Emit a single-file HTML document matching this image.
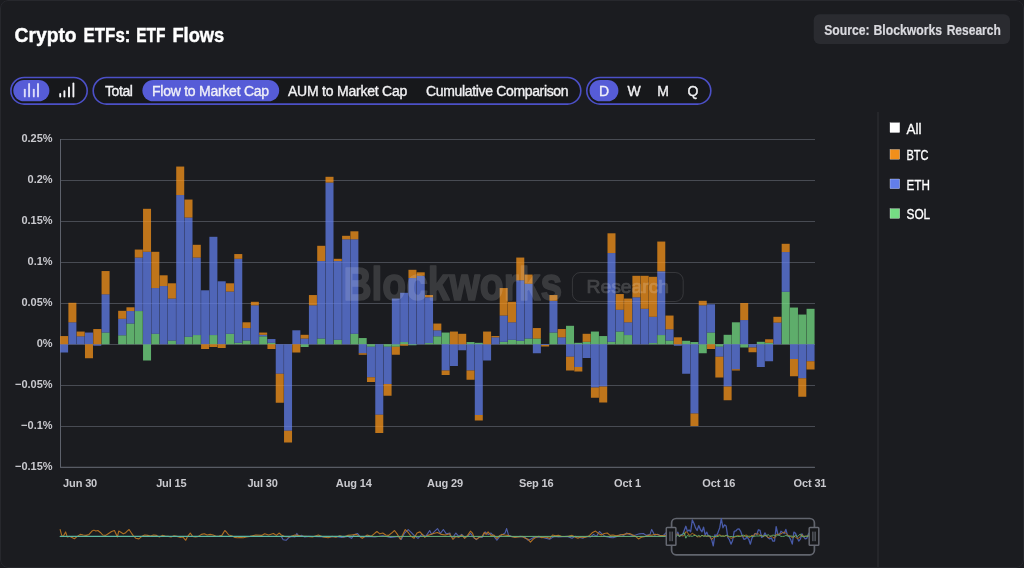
<!DOCTYPE html>
<html lang="en">
<head>
<meta charset="utf-8">
<title>Crypto ETFs: ETF Flows</title>
<style>
*{box-sizing:border-box;margin:0;padding:0}
html,body{width:1024px;height:568px;overflow:hidden;background:#1b1c20}
body{font-family:"Liberation Sans",Arial,sans-serif;color:#fff;position:relative}
.card{position:absolute;left:0;top:0;width:1024px;height:568px;background:#1b1c20;border-radius:8px;overflow:hidden}
.card:after{content:"";position:absolute;left:0;top:0;right:0;bottom:0;border:1px solid #27282d;border-radius:8px;pointer-events:none}
.chart{position:absolute;left:0;top:0;will-change:transform}
.lbl{position:absolute;top:82.1px;height:18px;line-height:18px;font-size:14px;color:#f2f2f4;white-space:nowrap;-webkit-text-stroke:0.35px #f2f2f4;will-change:transform}
.lbl.on{color:#eeeefc}
.lbl.c{width:30px;text-align:center}
.vline{position:absolute;left:877px;top:112px;width:2px;height:456px;background:#25262a}
</style>
</head>
<body>
<div class="card">
<svg class="chart" width="1024" height="568" viewBox="0 0 1024 568">
<g stroke="#484b53" stroke-width="1" shape-rendering="crispEdges">
<line x1="60.5" x2="814.8" y1="467.25" y2="467.25"/>
<line x1="60.5" x2="814.8" y1="426.25" y2="426.25"/>
<line x1="60.5" x2="814.8" y1="385.25" y2="385.25"/>
<line x1="60.5" x2="814.8" y1="344.25" y2="344.25"/>
<line x1="60.5" x2="814.8" y1="303.25" y2="303.25"/>
<line x1="60.5" x2="814.8" y1="262.25" y2="262.25"/>
<line x1="60.5" x2="814.8" y1="221.25" y2="221.25"/>
<line x1="60.5" x2="814.8" y1="180.25" y2="180.25"/>
<line x1="60.5" x2="814.8" y1="139.25" y2="139.25"/>
</g>
<g stroke="#5d616b" stroke-width="1">
<line x1="60.5" x2="60.5" y1="139" y2="467.5"/>
<line x1="60" x2="814.8" y1="467.25" y2="467.25"/>
</g>
<g font-family="Liberation Sans, Arial, sans-serif" font-weight="700" font-size="11" fill="#c9c9ce" text-anchor="end">
<text x="52.6" y="469.65">−0.15%</text>
<text x="52.6" y="428.65">−0.1%</text>
<text x="52.6" y="387.65">−0.05%</text>
<text x="52.6" y="346.65">0%</text>
<text x="52.6" y="305.65">0.05%</text>
<text x="52.6" y="264.65">0.1%</text>
<text x="52.6" y="223.65">0.15%</text>
<text x="52.6" y="182.65">0.2%</text>
<text x="52.6" y="141.65">0.25%</text>
</g>
<g font-family="Liberation Sans, Arial, sans-serif" font-weight="700" font-size="11" fill="#c9c9ce" text-anchor="middle" letter-spacing="-0.14">
<text x="80.09" y="487.3">Jun 30</text>
<text x="171.32" y="487.3">Jul 15</text>
<text x="262.56" y="487.3">Jul 30</text>
<text x="353.79" y="487.3">Aug 14</text>
<text x="445.02" y="487.3">Aug 29</text>
<text x="536.26" y="487.3">Sep 16</text>
<text x="627.49" y="487.3">Oct 1</text>
<text x="718.73" y="487.3">Oct 16</text>
<text x="809.96" y="487.3">Oct 31</text>
</g>
<g fill="#75DE84" fill-opacity="0.75">
<rect x="101.57" y="332.55" width="8" height="11.7"/><rect x="118.16" y="335.3" width="8" height="8.95"/><rect x="126.45" y="323.55" width="8" height="20.7"/><rect x="134.75" y="311.05" width="8" height="33.2"/><rect x="143.04" y="344.25" width="8" height="16.25"/><rect x="151.33" y="333.8" width="8" height="10.45"/><rect x="167.92" y="340.55" width="8" height="3.7"/><rect x="184.51" y="336.8" width="8" height="7.45"/><rect x="192.8" y="335.05" width="8" height="9.2"/><rect x="209.39" y="335.05" width="8" height="9.2"/><rect x="225.98" y="333.8" width="8" height="10.45"/><rect x="234.27" y="342.8" width="8" height="1.45"/><rect x="242.57" y="340.55" width="8" height="3.7"/><rect x="259.16" y="336.3" width="8" height="7.95"/><rect x="267.45" y="342.8" width="8" height="1.45"/><rect x="300.63" y="344.25" width="8" height="2.75"/><rect x="317.21" y="338.55" width="8" height="5.7"/><rect x="333.8" y="339.8" width="8" height="4.45"/><rect x="350.39" y="333.8" width="8" height="10.45"/><rect x="358.68" y="338.05" width="8" height="6.2"/><rect x="366.98" y="344.25" width="8" height="2.5"/><rect x="383.57" y="344.25" width="8" height="2.5"/><rect x="391.86" y="344.25" width="8" height="2.5"/><rect x="400.15" y="342.05" width="8" height="2.2"/><rect x="408.45" y="344.25" width="8" height="1"/><rect x="425.04" y="343.05" width="8" height="1.2"/><rect x="433.33" y="336.3" width="8" height="7.95"/><rect x="441.62" y="332.55" width="8" height="11.7"/><rect x="466.51" y="342.05" width="8" height="2.2"/><rect x="474.8" y="342.8" width="8" height="1.45"/><rect x="499.68" y="341.8" width="8" height="2.45"/><rect x="507.98" y="339.8" width="8" height="4.45"/><rect x="516.27" y="340.8" width="8" height="3.45"/><rect x="524.56" y="338.55" width="8" height="5.7"/><rect x="532.86" y="338.55" width="8" height="5.7"/><rect x="549.45" y="332.55" width="8" height="11.7"/><rect x="566.03" y="325.8" width="8" height="18.45"/><rect x="574.33" y="342.8" width="8" height="1.45"/><rect x="582.62" y="341.8" width="8" height="2.45"/><rect x="590.92" y="331.55" width="8" height="12.7"/><rect x="599.21" y="336.05" width="8" height="8.2"/><rect x="607.5" y="341.8" width="8" height="2.45"/><rect x="615.8" y="331.55" width="8" height="12.7"/><rect x="624.09" y="335.05" width="8" height="9.2"/><rect x="648.97" y="343.05" width="8" height="1.2"/><rect x="657.27" y="335.05" width="8" height="9.2"/><rect x="665.56" y="340.55" width="8" height="3.7"/><rect x="682.15" y="340.8" width="8" height="3.45"/><rect x="690.44" y="342.05" width="8" height="2.2"/><rect x="698.74" y="344.25" width="8" height="9"/><rect x="707.03" y="332.55" width="8" height="11.7"/><rect x="715.33" y="344.25" width="8" height="2.5"/><rect x="723.62" y="334.8" width="8" height="9.45"/><rect x="731.91" y="322.3" width="8" height="21.95"/><rect x="740.21" y="344.25" width="8" height="3.25"/><rect x="756.8" y="341.8" width="8" height="2.45"/><rect x="765.09" y="342.8" width="8" height="1.45"/><rect x="781.68" y="291.8" width="8" height="52.45"/><rect x="789.97" y="307.55" width="8" height="36.7"/><rect x="798.27" y="314.55" width="8" height="29.7"/><rect x="806.56" y="308.8" width="8" height="35.45"/>
</g>
<g fill="#627EEA" fill-opacity="0.75">
<rect x="60.1" y="344.25" width="8" height="8.25"/><rect x="68.39" y="322.3" width="8" height="21.95"/><rect x="76.69" y="336.3" width="8" height="7.95"/><rect x="84.98" y="332.55" width="8" height="11.7"/><rect x="93.28" y="344.25" width="8" height="1.5"/><rect x="101.57" y="294.3" width="8" height="38.25"/><rect x="118.16" y="318.8" width="8" height="16.5"/><rect x="126.45" y="311.05" width="8" height="12.5"/><rect x="134.75" y="257.55" width="8" height="53.5"/><rect x="143.04" y="251.8" width="8" height="92.45"/><rect x="151.33" y="288.05" width="8" height="45.75"/><rect x="159.63" y="286.05" width="8" height="58.2"/><rect x="167.92" y="298.55" width="8" height="42"/><rect x="176.22" y="195.05" width="8" height="149.2"/><rect x="184.51" y="217.55" width="8" height="119.25"/><rect x="192.8" y="257.55" width="8" height="77.5"/><rect x="201.1" y="290.3" width="8" height="53.95"/><rect x="209.39" y="236.8" width="8" height="98.25"/><rect x="217.69" y="281.3" width="8" height="62.95"/><rect x="225.98" y="291.55" width="8" height="42.25"/><rect x="234.27" y="258.8" width="8" height="84"/><rect x="242.57" y="328.05" width="8" height="12.5"/><rect x="250.86" y="305.3" width="8" height="38.95"/><rect x="259.16" y="334.8" width="8" height="1.5"/><rect x="267.45" y="339.05" width="8" height="3.75"/><rect x="275.74" y="344.25" width="8" height="29.5"/><rect x="284.04" y="344.25" width="8" height="86.5"/><rect x="292.33" y="330.3" width="8" height="13.95"/><rect x="300.63" y="338.55" width="8" height="5.7"/><rect x="308.92" y="305.3" width="8" height="38.95"/><rect x="317.21" y="261.05" width="8" height="77.5"/><rect x="325.51" y="182.55" width="8" height="161.7"/><rect x="333.8" y="261.05" width="8" height="78.75"/><rect x="342.1" y="239.3" width="8" height="104.95"/><rect x="350.39" y="239.3" width="8" height="94.5"/><rect x="358.68" y="344.25" width="8" height="9"/><rect x="366.98" y="346.75" width="8" height="30.5"/><rect x="375.27" y="344.25" width="8" height="70.5"/><rect x="383.57" y="346.75" width="8" height="37.25"/><rect x="391.86" y="298.55" width="8" height="45.7"/><rect x="400.15" y="292.8" width="8" height="49.25"/><rect x="408.45" y="278.05" width="8" height="66.2"/><rect x="416.74" y="275.8" width="8" height="68.45"/><rect x="425.04" y="297.3" width="8" height="45.75"/><rect x="433.33" y="330.3" width="8" height="6"/><rect x="441.62" y="344.25" width="8" height="26.25"/><rect x="449.92" y="344.25" width="8" height="21.75"/><rect x="458.21" y="344.25" width="8" height="6"/><rect x="466.51" y="344.25" width="8" height="26.25"/><rect x="474.8" y="344.25" width="8" height="70.75"/><rect x="483.09" y="344.25" width="8" height="16.25"/><rect x="491.39" y="337.3" width="8" height="6.95"/><rect x="499.68" y="315.55" width="8" height="26.25"/><rect x="507.98" y="322.3" width="8" height="17.5"/><rect x="516.27" y="280.3" width="8" height="60.5"/><rect x="524.56" y="283.8" width="8" height="54.75"/><rect x="532.86" y="344.25" width="8" height="9"/><rect x="541.15" y="344.25" width="8" height="0.75"/><rect x="549.45" y="300.8" width="8" height="31.75"/><rect x="557.74" y="337.3" width="8" height="6.95"/><rect x="566.03" y="344.25" width="8" height="12.5"/><rect x="574.33" y="344.25" width="8" height="22.75"/><rect x="582.62" y="344.25" width="8" height="13.75"/><rect x="590.92" y="344.25" width="8" height="43.25"/><rect x="599.21" y="344.25" width="8" height="42.25"/><rect x="607.5" y="253.05" width="8" height="88.75"/><rect x="615.8" y="309.8" width="8" height="21.75"/><rect x="624.09" y="322.3" width="8" height="12.75"/><rect x="632.39" y="297.3" width="8" height="46.95"/><rect x="640.68" y="308.8" width="8" height="35.45"/><rect x="648.97" y="316.8" width="8" height="26.25"/><rect x="657.27" y="271.3" width="8" height="63.75"/><rect x="665.56" y="329.3" width="8" height="11.25"/><rect x="673.86" y="344.25" width="8" height="1.5"/><rect x="682.15" y="344.25" width="8" height="29.5"/><rect x="690.44" y="344.25" width="8" height="69.25"/><rect x="698.74" y="305.3" width="8" height="38.95"/><rect x="707.03" y="304.3" width="8" height="28.25"/><rect x="715.33" y="346.75" width="8" height="10"/><rect x="723.62" y="344.25" width="8" height="42.25"/><rect x="731.91" y="344.25" width="8" height="25"/><rect x="740.21" y="320.05" width="8" height="24.2"/><rect x="748.5" y="344.25" width="8" height="3.25"/><rect x="756.8" y="344.25" width="8" height="22.75"/><rect x="765.09" y="344.25" width="8" height="17"/><rect x="773.38" y="322.55" width="8" height="21.7"/><rect x="781.68" y="252.05" width="8" height="39.75"/><rect x="789.97" y="344.25" width="8" height="14.75"/><rect x="798.27" y="344.25" width="8" height="34"/><rect x="806.56" y="344.25" width="8" height="17"/>
</g>
<g fill="#F7931A" fill-opacity="0.75">
<rect x="60.1" y="336.05" width="8" height="8.2"/><rect x="68.39" y="302.8" width="8" height="19.5"/><rect x="76.69" y="331.55" width="8" height="4.75"/><rect x="84.98" y="344.25" width="8" height="14"/><rect x="93.28" y="329.05" width="8" height="15.2"/><rect x="101.57" y="271.05" width="8" height="23.25"/><rect x="118.16" y="310.8" width="8" height="8"/><rect x="126.45" y="307.3" width="8" height="3.75"/><rect x="134.75" y="249.55" width="8" height="8"/><rect x="143.04" y="208.8" width="8" height="43"/><rect x="151.33" y="251.8" width="8" height="36.25"/><rect x="159.63" y="275.3" width="8" height="10.75"/><rect x="167.92" y="283.3" width="8" height="15.25"/><rect x="176.22" y="166.55" width="8" height="28.5"/><rect x="184.51" y="199.55" width="8" height="18"/><rect x="192.8" y="244.8" width="8" height="12.75"/><rect x="201.1" y="344.25" width="8" height="4.75"/><rect x="209.39" y="344.25" width="8" height="2.75"/><rect x="217.69" y="344.25" width="8" height="3.75"/><rect x="225.98" y="283.3" width="8" height="8.25"/><rect x="234.27" y="254.05" width="8" height="4.75"/><rect x="242.57" y="322.3" width="8" height="5.75"/><rect x="250.86" y="301.8" width="8" height="3.5"/><rect x="259.16" y="332.55" width="8" height="2.25"/><rect x="267.45" y="344.25" width="8" height="4.75"/><rect x="275.74" y="373.75" width="8" height="29"/><rect x="284.04" y="430.75" width="8" height="11.75"/><rect x="292.33" y="344.25" width="8" height="8.25"/><rect x="300.63" y="334.8" width="8" height="3.75"/><rect x="308.92" y="295.05" width="8" height="10.25"/><rect x="317.21" y="245.8" width="8" height="15.25"/><rect x="325.51" y="176.8" width="8" height="5.75"/><rect x="333.8" y="258.8" width="8" height="2.25"/><rect x="342.1" y="235.8" width="8" height="3.5"/><rect x="350.39" y="231.3" width="8" height="8"/><rect x="358.68" y="353.25" width="8" height="1.5"/><rect x="366.98" y="377.25" width="8" height="4.75"/><rect x="375.27" y="414.75" width="8" height="18.25"/><rect x="383.57" y="384" width="8" height="11.75"/><rect x="391.86" y="346.75" width="8" height="8"/><rect x="400.15" y="344.25" width="8" height="1.5"/><rect x="408.45" y="269.8" width="8" height="8.25"/><rect x="416.74" y="272.3" width="8" height="3.5"/><rect x="425.04" y="295.05" width="8" height="2.25"/><rect x="433.33" y="323.55" width="8" height="6.75"/><rect x="441.62" y="370.5" width="8" height="4.5"/><rect x="449.92" y="331.55" width="8" height="12.7"/><rect x="458.21" y="333.8" width="8" height="10.45"/><rect x="466.51" y="370.5" width="8" height="9.25"/><rect x="474.8" y="415" width="8" height="5.5"/><rect x="483.09" y="331.55" width="8" height="12.7"/><rect x="491.39" y="336.05" width="8" height="1.25"/><rect x="499.68" y="288.05" width="8" height="27.5"/><rect x="507.98" y="301.8" width="8" height="20.5"/><rect x="516.27" y="257.55" width="8" height="22.75"/><rect x="524.56" y="274.55" width="8" height="9.25"/><rect x="532.86" y="328.05" width="8" height="10.5"/><rect x="541.15" y="345" width="8" height="1.5"/><rect x="549.45" y="295.05" width="8" height="5.75"/><rect x="557.74" y="329.05" width="8" height="8.25"/><rect x="566.03" y="356.75" width="8" height="13.75"/><rect x="574.33" y="367" width="8" height="4.5"/><rect x="582.62" y="333.8" width="8" height="8"/><rect x="590.92" y="387.5" width="8" height="10.25"/><rect x="599.21" y="386.5" width="8" height="16"/><rect x="607.5" y="233.3" width="8" height="19.75"/><rect x="615.8" y="294.05" width="8" height="15.75"/><rect x="624.09" y="298.55" width="8" height="23.75"/><rect x="632.39" y="275.8" width="8" height="21.5"/><rect x="640.68" y="275.8" width="8" height="33"/><rect x="648.97" y="276.8" width="8" height="40"/><rect x="657.27" y="241.55" width="8" height="29.75"/><rect x="665.56" y="315.55" width="8" height="13.75"/><rect x="673.86" y="337.3" width="8" height="6.95"/><rect x="690.44" y="413.5" width="8" height="12.5"/><rect x="698.74" y="300.8" width="8" height="4.5"/><rect x="707.03" y="344.25" width="8" height="4.75"/><rect x="715.33" y="356.75" width="8" height="20.75"/><rect x="723.62" y="386.5" width="8" height="13.75"/><rect x="731.91" y="369.25" width="8" height="1.25"/><rect x="740.21" y="303.05" width="8" height="17"/><rect x="748.5" y="347.5" width="8" height="4.75"/><rect x="765.09" y="339.3" width="8" height="3.5"/><rect x="773.38" y="316.8" width="8" height="5.75"/><rect x="781.68" y="243.8" width="8" height="8.25"/><rect x="789.97" y="359" width="8" height="17.25"/><rect x="798.27" y="378.25" width="8" height="18.5"/><rect x="806.56" y="361.25" width="8" height="8.25"/>
</g>
<g opacity="0.135" fill="#ffffff" stroke="#ffffff" stroke-linejoin="round" font-family="Liberation Sans, Arial, sans-serif" font-weight="700">
<text x="343.4" y="300" font-size="47" stroke-width="1.6" textLength="218.8" lengthAdjust="spacingAndGlyphs">Blockworks</text>
</g>
<g opacity="0.17" fill="#ffffff" stroke="#ffffff" font-family="Liberation Sans, Arial, sans-serif" font-weight="700">
<text x="586.5" y="293.2" font-size="18.5" font-weight="400" stroke-width="0.7" textLength="82.6" lengthAdjust="spacingAndGlyphs">Research</text>
</g>
<rect x="572.4" y="272.5" width="110.8" height="29" rx="8" ry="8" fill="none" stroke="#ffffff" stroke-opacity="0.12" stroke-width="1"/>
<g font-family="Liberation Sans, Arial, sans-serif" font-size="14" fill="#ffffff" stroke="#ffffff" stroke-width="0.3">
<rect x="890" y="122.8" width="9.7" height="9.7" fill="#ffffff"/>
<text x="906.5" y="133.7" textLength="15" lengthAdjust="spacingAndGlyphs">All</text>
<rect x="890" y="149.5" width="9.7" height="9.7" fill="#F18F1A"/>
<text x="906.5" y="159.9" textLength="22" lengthAdjust="spacingAndGlyphs">BTC</text>
<rect x="890" y="179" width="9.7" height="9.7" fill="#627EEA"/>
<text x="906.5" y="189.9" textLength="23.4" lengthAdjust="spacingAndGlyphs">ETH</text>
<rect x="890" y="208.7" width="9.7" height="9.7" fill="#75DE84"/>
<text x="906.5" y="218.9" textLength="23.7" lengthAdjust="spacingAndGlyphs">SOL</text>
</g>
<text font-family="Liberation Sans, Arial, sans-serif" font-weight="700" font-size="21" fill="#ffffff" stroke="#ffffff" stroke-width="0.45" y="42.3">
<tspan x="14.6" textLength="62" lengthAdjust="spacingAndGlyphs">Crypto</tspan>
<tspan x="83.6" textLength="46.8" lengthAdjust="spacingAndGlyphs">ETFs:</tspan>
<tspan x="136.2" textLength="29.2" lengthAdjust="spacingAndGlyphs">ETF</tspan>
<tspan x="172.4" textLength="51.8" lengthAdjust="spacingAndGlyphs">Flows</tspan>
</text>
<rect x="813.7" y="14.2" width="196.3" height="29.8" rx="6" fill="#2a2b30"/>
<text font-family="Liberation Sans, Arial, sans-serif" font-weight="700" font-size="14.4" fill="#d9d9de" stroke="#d9d9de" stroke-width="0.2" y="35.2">
<tspan x="824.2" textLength="45.3" lengthAdjust="spacingAndGlyphs">Source:</tspan>
<tspan x="873.4" textLength="68.8" lengthAdjust="spacingAndGlyphs">Blockworks</tspan>
<tspan x="946.7" textLength="54.1" lengthAdjust="spacingAndGlyphs">Research</tspan>
</text>
<rect x="10.9" y="77.5" width="76.3" height="26.6" rx="13.3" fill="#17181b" stroke="#4c50c8" stroke-width="1.6"/>
<rect x="13.3" y="79.9" width="36.1" height="21.4" rx="10.7" fill="#565cd7"/>
<rect x="93.2" y="77.5" width="487.6" height="26.6" rx="13.3" fill="#17181b" stroke="#4c50c8" stroke-width="1.6"/>
<rect x="142.4" y="79.9" width="136.8" height="21.4" rx="10.7" fill="#565cd7"/>
<rect x="586.8" y="77.5" width="124" height="26.6" rx="13.3" fill="#17181b" stroke="#4c50c8" stroke-width="1.6"/>
<rect x="589.5" y="79.9" width="28.9" height="21.4" rx="10.7" fill="#565cd7"/>
<g stroke="#dcdcfa" stroke-width="1.9" stroke-linecap="round">
<line x1="24.8" x2="24.8" y1="89.6" y2="96.4"/>
<line x1="29.1" x2="29.1" y1="83.9" y2="96.4"/>
<line x1="33.8" x2="33.8" y1="89.6" y2="96.4"/>
<line x1="38" x2="38" y1="83.9" y2="96.4"/>
</g>
<g stroke="#f4f4f6" stroke-width="1.9" stroke-linecap="round">
<line x1="60.2" x2="60.2" y1="94" y2="96.5"/>
<line x1="64.4" x2="64.4" y1="91.1" y2="96.5"/>
<line x1="69" x2="69" y1="87.4" y2="96.5"/>
<line x1="73.4" x2="73.4" y1="83.5" y2="96.5"/>
</g>
<rect x="671.6" y="518.5" width="142.8" height="36.3" rx="4.5" ry="4.5" fill="#17181b" stroke="#62656e" stroke-width="1.7"/>
<g fill="none" stroke-width="1.1" stroke-linejoin="round" stroke-linecap="round">
<polyline stroke="#5a6cc4" stroke-opacity="0.85" points="281.25,536.37 283.2,539.69 286.13,540.27 289.06,537.34 291.99,536.37 294.92,536.95 296.88,533.44 298.83,536.37 301.76,535.39 304.69,536.95 308.59,536.37 312.5,536.56 328.12,536.95 335.94,536.56 341.8,537.34 347.66,536.37 351.56,538.32 354.49,534.41 357.42,533.44 360.35,536.95 367.19,536.37 375,536.95 382.81,535.78 390.62,537.34 398.44,536.37 401.37,539.3 404.3,533.44 408.2,529.53 411.13,532.46 414.06,535.39 417.97,538.32 421.88,534.41 425.78,536.37 429.69,530.51 431.64,534.41 434.57,531.48 437.5,528.55 440.43,533.44 443.36,529.53 446.29,533.83 450,533.05 450,535.39 452.93,537.34 455.86,533.05 458.79,536.37 461.72,534.41 464.65,537.34 467.58,536.37 470.51,533.44 473.44,537.34 476.37,539.69 479.3,536.95 482.23,537.34 485.16,531.88 488.09,534.41 491.02,533.05 493.95,536.37 496.88,540.27 499.8,536.37 502.73,534.41 505.08,533.05 506.64,528.55 508.59,535.39 511.52,536.37 514.45,536.95 520.31,536.37 525.2,537.34 528.12,540.27 531.05,538.91 533.98,537.34 537.89,536.95 541.8,537.34 545.7,538.32 549.61,539.3 552.54,537.34 555.47,536.37 558.4,536.95 567.19,536.37 572.07,538.32 575,536.37 578.91,537.34 582.81,538.32 586.72,536.37 590.62,536.95 593.55,534.41 596.48,536.37 599.41,531.48 602.34,534.41 605.27,536.37 609.18,537.34 613.09,537.73 616.99,536.37 620.9,534.41 623.83,535.39 626.76,533.05 629.69,534.41 632.62,535.39 635.55,535 639.45,533.83 643.36,533.44 646.29,535.39 650,534.41 651.72,529.41 654.65,535.27 657.58,534.3 660.51,535.86 663.44,535.27 666.37,532.34 671.25,534.3"/>
<polyline stroke="#b87422" stroke-opacity="0.95" points="60.16,529.53 61.72,535.39 63.28,536.37 65.62,531.88 67.19,536.95 69.53,536.37 71.48,537.34 74.41,538.71 77.34,536.37 80.27,534.41 83.2,535 86.13,535.39 89.06,534.41 91.99,531.09 93.95,530.12 95.9,531.09 97.85,530.51 100.39,532.46 102.73,535 105.66,535.39 108.59,533.44 111.52,531.48 114.45,530.51 117.38,536.95 118.75,531.09 121.29,532.46 123.24,533.83 125.2,533.05 127.15,531.09 129.1,529.53 131.05,532.46 133.01,535.39 135.94,538.32 138.87,538.91 141.8,536.37 144.73,535 147.66,535.39 150.59,535.98 153.52,535 156.45,535.39 159.38,536.95 162.3,535.39 165.23,535.98 168.16,536.37 171.09,536.95 174.02,535.78 176.95,536.37 179.88,537.34 182.81,536.95 185.74,540.27 187.7,536.37 190.23,533.05 192.58,536.37 195.51,536.95 198.44,536.37 201.37,534.41 204.3,533.83 207.23,535 210.16,534.41 213.09,535 216.02,536.37 218.95,535.98 221.88,535.39 224.8,530.51 226.76,532.46 228.71,535 231.64,535.78 234.57,537.34 237.5,537.73 240.43,537.34 243.36,537.73 246.29,536.95 250,536.37 250,536.37 255.86,535 261.72,535.39 264.65,533.83 268.55,535 273.44,533.44 276.37,535.39 279.3,533.05 281.25,535 284.18,536.37 289.06,536.95 294.92,535 297.85,535.39 300.78,535.98 306.64,536.37 312.5,536.95 318.36,535 323.24,536.95 328.12,537.73 332.03,536.37 335.94,537.34 339.84,535.78 343.75,536.95 347.66,535.39 351.56,535 356.45,534.41 359.38,536.37 362.3,538.32 365.23,536.37 367.19,535 371.09,536.37 375,533.05 376.95,531.48 379.88,533.83 382.81,533.05 385.74,535 388.67,535.39 391.6,533.05 394.53,530.51 397.46,534.41 400.39,539.3 403.32,533.44 405.27,529.53 408.2,532.46 411.13,536.37 414.06,538.32 416.99,533.05 419.92,531.88 422.85,535 424.8,537.34 427.73,535.39 430.66,534.41 433.59,533.44 437.5,532.46 441.41,534.41 445.31,535 450,533.83 450,534.41 452.93,539.3 455.86,536.37 458.79,537.34 461.72,535 464.65,538.32 467.58,535.39 470.51,531.09 472.46,533.05 474.41,538.32 476.37,539.3 479.3,537.34 482.23,536.37 484.18,532.46 486.13,534.41 488.09,531.88 491.02,535.39 493.95,535 496.88,538.32 499.8,535.39 501.76,534.41 504.69,535 507.62,535.39 510.55,536.37 514.45,537.34 518.36,536.95 522.27,536.37 525.2,538.32 528.12,539.3 530.47,542.23 533.01,539.3 535.94,537.34 538.87,536.37 541.8,537.73 545.7,536.95 549.61,538.32 552.54,535 555.47,535.78 558.4,535.39 561.33,536.37 567.19,536.56 572.07,535.39 575,536.95 577.93,538.32 580.86,536.95 583.79,537.34 586.72,536.95 589.65,535.39 592.58,532.46 595.51,531.09 598.44,533.44 601.37,535 604.3,533.44 607.23,533.05 610.16,535.39 613.09,535 616.02,535.78 619.92,535 623.83,534.41 626.76,533.83 629.69,533.44 632.62,535 635.55,536.37 638.48,538.91 641.41,537.34 645.31,536.37 650,535 651.72,535.27 655.62,534.3 659.53,535.27 663.44,535.86 666.37,535.27 671.25,535.86"/>
<line x1="60.2" x2="372" y1="536.4" y2="536.4" stroke="#5cb8a2"/>
<line x1="372" x2="671.6" y1="536.4" y2="536.4" stroke="#6ab47e" stroke-width="1"/>
<polyline stroke="#485aa8" stroke-width="1.3" points="669.7,537.31 671.31,534.01 672.93,535.55 674.54,535.13 676.15,536.56 677.77,532.19 679.38,536.4 680.99,534.58 682.6,535.02 684.22,530.51 685.83,526.25 687.44,531.37 689.06,530.02 690.67,531.78 692.28,520.01 693.9,523.28 695.51,527.88 697.12,530.49 698.73,525.59 700.35,529.5 701.96,531.75 703.57,527.16 705.19,535.02 706.8,532.14 708.41,536.24 710.03,535.99 711.64,539.64 713.25,545.91 714.86,534.89 716.48,535.79 718.09,532.14 719.7,527.88 721.32,518.63 722.93,527.74 724.54,524.88 726.16,526 727.77,537.39 729.38,539.75 730.99,544.15 732.61,540.5 734.22,531.39 735.83,530.98 737.45,529.14 739.06,528.89 740.67,531.37 742.29,535.74 743.9,539.29 745.51,538.79 747.12,537.06 748.74,539.29 750.35,544.18 751.96,538.19 753.58,535.66 755.19,533.51 756.8,534.48 758.42,529.75 760.03,530.38 761.64,537.39 763.25,536.48 764.87,532.91 766.48,535.66 768.09,537.77 769.71,538.9 771.32,537.91 772.93,541.16 774.55,541.05 776.16,526.64 777.77,534.01 779.38,535 781,531.26 782.61,532.52 784.22,533.51 785.84,529.39 787.45,535.16 789.06,536.56 790.68,539.64 792.29,544.02 793.9,532.14 795.51,533.29 797.13,537.5 798.74,541.05 800.35,539.15 801.97,533.76 803.58,536.76 805.19,538.9 806.81,538.27 808.42,534.03 810.03,532.03 811.64,538.02 813.26,540.14 814.87,538.27"/>
<polyline stroke="#b06c20" stroke-width="1.0" points="669.7,535.52 671.31,534.25 672.93,535.88 674.54,537.94 676.15,534.75 677.77,533.84 679.38,536.4 680.99,535.52 682.6,535.99 684.22,535.52 685.83,531.67 687.44,532.41 689.06,535.22 690.67,534.72 692.28,533.26 693.9,534.42 695.51,535 697.12,536.92 698.73,536.7 700.35,536.81 701.96,535.49 703.57,535.88 705.19,535.77 706.8,536.01 708.41,536.15 710.03,536.92 711.64,539.59 713.25,537.69 714.86,537.31 716.48,535.99 718.09,535.27 719.7,534.72 721.32,535.77 722.93,536.15 724.54,536.01 726.16,535.52 727.77,536.56 729.38,536.92 730.99,538.41 732.61,537.69 734.22,537.28 735.83,536.56 737.45,535.49 739.06,536.01 740.67,536.15 742.29,535.66 743.9,536.89 745.51,535.02 747.12,535.27 748.74,537.42 750.35,537 751.96,535.02 753.58,536.26 755.19,533.38 756.8,534.14 758.42,533.9 760.03,535.38 761.64,535.25 763.25,536.56 764.87,535.77 766.48,535.49 768.09,537.91 769.71,536.89 771.32,535.52 772.93,537.53 774.55,538.16 776.16,534.23 777.77,534.67 779.38,533.79 781,534.03 782.61,532.77 784.22,532 785.84,533.13 787.45,534.89 789.06,535.66 790.68,536.4 792.29,537.77 793.9,535.9 795.51,536.92 797.13,538.68 798.74,537.91 800.35,536.54 801.97,534.53 803.58,536.92 805.19,536.4 806.81,536.01 808.42,535.77 810.03,535.49 811.64,538.3 813.26,538.43 814.87,537.31"/>
<polyline stroke="#62b46e" stroke-width="0.9" points="669.7,536.4 671.31,536.4 672.93,536.4 674.54,536.4 676.15,536.4 677.77,535.13 679.38,536.4 680.99,535.44 682.6,534.14 684.22,532.77 685.83,538.19 687.44,535.27 689.06,536.4 690.67,536.01 692.28,536.4 693.9,535.6 695.51,535.41 697.12,536.4 698.73,535.41 700.35,536.4 701.96,535.27 703.57,536.26 705.19,536.01 706.8,536.4 708.41,535.55 710.03,536.26 711.64,536.4 713.25,536.4 714.86,536.4 716.48,536.7 718.09,536.4 719.7,535.79 721.32,536.4 722.93,535.93 724.54,536.4 726.16,535.27 727.77,535.74 729.38,536.67 730.99,536.4 732.61,536.67 734.22,536.67 735.83,536.18 737.45,536.51 739.06,536.4 740.67,536.29 742.29,535.55 743.9,535.13 745.51,536.4 747.12,536.4 748.74,536.18 750.35,536.26 751.96,536.4 753.58,536.4 755.19,536.15 756.8,535.93 758.42,536.04 760.03,535.79 761.64,535.79 763.25,536.4 764.87,535.13 766.48,536.4 768.09,534.39 769.71,536.26 771.32,536.15 772.93,535.02 774.55,535.52 776.16,536.15 777.77,535.02 779.38,535.41 781,536.4 782.61,536.4 784.22,536.29 785.84,535.41 787.45,536.01 789.06,536.4 790.68,536.04 792.29,536.18 793.9,537.39 795.51,535.13 797.13,536.67 798.74,535.38 800.35,534.01 801.97,536.76 803.58,536.4 805.19,536.15 806.81,536.26 808.42,536.4 810.03,530.65 811.64,532.38 813.26,533.15 814.87,532.52"/>
</g>
<rect x="666.3" y="527.6" width="9.6" height="17.6" rx="0.8" ry="0.8" fill="#16171a" stroke="#666972" stroke-width="1.5"/>
<rect x="669.2" y="531.6" width="1.5" height="9.6" fill="#52555d"/>
<rect x="671.5" y="531.6" width="1.5" height="9.6" fill="#52555d"/>
<rect x="809.2" y="527.6" width="9.6" height="17.6" rx="0.8" ry="0.8" fill="#16171a" stroke="#666972" stroke-width="1.5"/>
<rect x="812.1" y="531.6" width="1.5" height="9.6" fill="#52555d"/>
<rect x="814.4" y="531.6" width="1.5" height="9.6" fill="#52555d"/>
</svg>

<div class="lbl" style="left:104.8px;letter-spacing:-0.42px">Total</div>
<div class="lbl on" style="left:152.2px;letter-spacing:-0.25px">Flow to Market Cap</div>
<div class="lbl" style="left:287.6px;letter-spacing:-0.227px">AUM to Market Cap</div>
<div class="lbl" style="left:425.8px;letter-spacing:-0.34px">Cumulative Comparison</div>
<div class="lbl on c" style="left:589px">D</div>
<div class="lbl c" style="left:618.6px">W</div>
<div class="lbl c" style="left:648.3px">M</div>
<div class="lbl c" style="left:678.3px">Q</div>

<div class="vline"></div>
</div>
</body>
</html>
